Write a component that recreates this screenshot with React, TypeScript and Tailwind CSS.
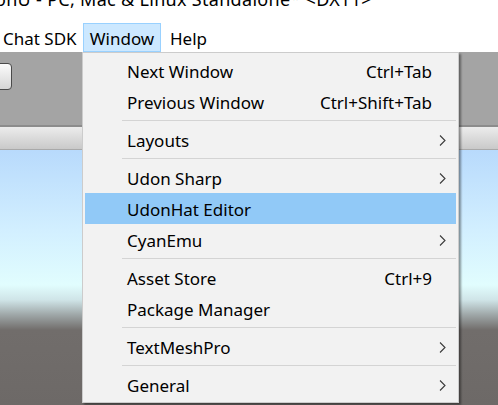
import React from 'react';

type Entry =
  | { kind: 'item'; label: string; shortcut?: string; sub?: boolean; active?: boolean }
  | { kind: 'sep' };

const windowMenu: Entry[] = [
  { kind: 'item', label: 'Next Window', shortcut: 'Ctrl+Tab' },
  { kind: 'item', label: 'Previous Window', shortcut: 'Ctrl+Shift+Tab' },
  { kind: 'sep' },
  { kind: 'item', label: 'Layouts', sub: true },
  { kind: 'sep' },
  { kind: 'item', label: 'Udon Sharp', sub: true },
  { kind: 'item', label: 'UdonHat Editor', active: true },
  { kind: 'item', label: 'CyanEmu', sub: true },
  { kind: 'sep' },
  { kind: 'item', label: 'Asset Store', shortcut: 'Ctrl+9' },
  { kind: 'item', label: 'Package Manager' },
  { kind: 'sep' },
  { kind: 'item', label: 'TextMeshPro', sub: true },
  { kind: 'sep' },
  { kind: 'item', label: 'General', sub: true },
];

const Chevron = () => (
  <svg width="7" height="11" viewBox="0 0 7 11" className="block">
    <polyline points="1,0.5 6,5.5 1,10.5" fill="none" stroke="#3a3a3a" strokeWidth="1.1" />
  </svg>
);

const MenuRow: React.FC<{ entry: Entry }> = ({ entry }) => {
  if (entry.kind === 'sep') {
    return (
      <div className="h-[7px] flex items-center pl-[37px]">
        <div className="h-px w-full bg-[#d4d4d4]" />
      </div>
    );
  }
  return (
    <div className={`h-[31px] flex items-center pl-[42px] pt-[2px] ${entry.active ? 'bg-[#91c9f7]' : ''}`}>
      <span className="flex-1">{entry.label}</span>
      {entry.shortcut && <span>{entry.shortcut}</span>}
      <span className="w-[24px] pl-[7px] flex items-center">{entry.sub && <Chevron />}</span>
    </div>
  );
};

export default function App() {
  return (
    <div
      className="relative h-[405px] w-[498px] overflow-hidden bg-white text-[17px] leading-[22px] text-black flex flex-col"
      style={{ fontFamily: '"Noto Sans", "Open Sans", sans-serif' }}
    >
      {/* title bar, mostly scrolled out of view */}
      <div className="h-[23px] overflow-hidden whitespace-nowrap">
        <div className="mt-[-12px] ml-[-5px] text-[18px] tracking-[0.3px]">onU - PC, Mac &amp; Linux Standalone* &lt;DX11&gt;</div>
      </div>

      {/* menu bar */}
      <div className="h-[29px] flex items-stretch whitespace-nowrap">
        <div className="w-[83px] pl-[2px] pt-[2px] flex items-center border border-transparent">Chat SDK</div>
        <div className="w-[78px] pt-[2px] flex items-center justify-center border border-[#99d1ff] bg-[#cce8ff]">Window</div>
        <div className="pl-[9px] pt-[2px] flex items-center">Help</div>
      </div>

      {/* editor area */}
      <div className="flex-1 flex flex-col">
        <div className="h-[73px] bg-[#a4a4a4] flex items-start">
          <div className="ml-[-20px] mt-[11px] w-[32px] h-[27px] rounded-[4px] border border-[#4a4a4a] bg-[linear-gradient(to_bottom,#fbfbfb,#d6d6d6)]" />
        </div>
        <div className="h-[2px] bg-[#8c8c8c]" />
        <div className="h-[23px] bg-[linear-gradient(to_bottom,#ececec,#c9c9c9)] border-b border-[#a9a9a9]" />
        <div className="flex-1 bg-[linear-gradient(to_bottom,#b8dafc_0px,#d2efff_80px,#e1fdfe_135px,#cfe4e7_150px,#9ea6a7_165px,#716d6b_180px,#6d6967_100%)]" />
      </div>

      {/* open Window dropdown */}
      <div className="absolute left-[82px] top-[52px] w-[377px] border border-[#cccccc] bg-[#f2f2f2] p-[2px] shadow-[2px_2px_2px_rgba(0,0,0,0.4)] whitespace-nowrap">
        {windowMenu.map((entry, i) => (
          <MenuRow key={i} entry={entry} />
        ))}
      </div>
    </div>
  );
}
